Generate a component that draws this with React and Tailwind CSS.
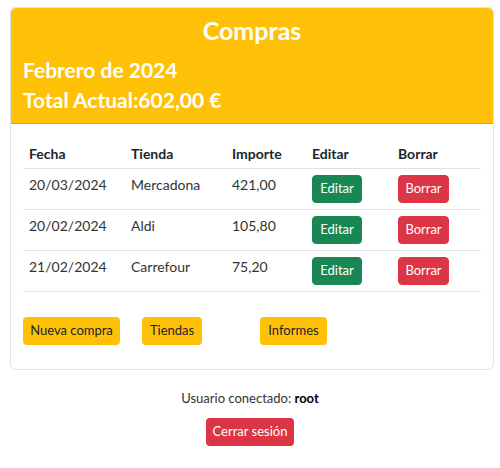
import React from "react";

const compras = [
  { fecha: "20/03/2024", tienda: "Mercadona", importe: "421,00" },
  { fecha: "20/02/2024", tienda: "Aldi", importe: "105,80" },
  { fecha: "21/02/2024", tienda: "Carrefour", importe: "75,20" },
];

export default function App() {
  return (
    <div className="min-h-[468px] bg-white pt-[7px] text-[#212529] font-['Lato',sans-serif]">
      {/* Card */}
      <div className="mx-[10px] w-[484px] rounded-[6px] border border-[#dee2e6] overflow-hidden">
        <div className="bg-[#ffc107] text-white px-[12px] pt-[4px] pb-[8px] border-b border-[#e0a800]">
          <h1 className="text-center text-[25px] font-bold leading-[36px]">Compras</h1>
          <h2 className="text-[21px] font-bold leading-[30px] mt-[7px]">Febrero de 2024</h2>
          <h2 className="text-[21px] font-bold leading-[30px]">Total Actual:602,00 €</h2>
        </div>

        <div className="px-[12px] pt-[13px] pb-[24px]">
          <table className="w-full text-[14px] border-collapse">
            <thead>
              <tr className="border-b border-[#dee2e6]">
                <th className="w-[102px] text-left font-bold px-[6px] pt-[8px] pb-[6px] leading-[17px]">Fecha</th>
                <th className="w-[101px] text-left font-bold px-[6px] pt-[8px] pb-[6px] leading-[17px]">Tienda</th>
                <th className="w-[80px] text-left font-bold px-[6px] pt-[8px] pb-[6px] leading-[17px]">Importe</th>
                <th className="w-[86px] text-left font-bold px-[6px] pt-[8px] pb-[6px] leading-[17px]">Editar</th>
                <th className="text-left font-bold px-[6px] pt-[8px] pb-[6px] leading-[17px]">Borrar</th>
              </tr>
            </thead>
            <tbody>
              {compras.map((c) => (
                <tr key={c.fecha + c.tienda} className="border-b border-[#dee2e6] align-top">
                  <td className="px-[6px] pt-[7px] leading-[18px] text-[#333]">{c.fecha}</td>
                  <td className="px-[6px] pt-[7px] leading-[18px] text-[#333]">{c.tienda}</td>
                  <td className="px-[6px] pt-[7px] leading-[18px] text-[#333]">{c.importe}</td>
                  <td className="px-[6px] pt-[6px] pb-[6px]">
                    <button className="block h-[28px] w-[50px] rounded-[4px] border border-[#198754] bg-[#198754] text-white text-[13px]">
                      Editar
                    </button>
                  </td>
                  <td className="px-[6px] pt-[6px] pb-[6px]">
                    <button className="block h-[28px] w-[51px] rounded-[4px] border border-[#dc3545] bg-[#dc3545] text-white text-[13px]">
                      Borrar
                    </button>
                  </td>
                </tr>
              ))}
            </tbody>
          </table>

          <div className="flex mt-[25px] text-[13px] text-[#212529]">
            <button className="h-[28px] w-[97px] rounded-[4px] bg-[#ffc107]">Nueva compra</button>
            <button className="ml-[22px] h-[28px] w-[60px] rounded-[4px] bg-[#ffc107]">Tiendas</button>
            <button className="ml-[58px] h-[28px] w-[67px] rounded-[4px] bg-[#ffc107]">Informes</button>
          </div>
        </div>
      </div>

      {/* Usuario */}
      <div className="flex flex-col items-center mt-[18px]">
        <p className="text-[13px] leading-[20px] text-[#333]">
          Usuario conectado: <b className="text-black">root</b>
        </p>
        <button className="mt-[10px] h-[28px] w-[88px] rounded-[4px] bg-[#dc3545] text-white text-[13px]">
          Cerrar sesión
        </button>
      </div>
    </div>
  );
}
